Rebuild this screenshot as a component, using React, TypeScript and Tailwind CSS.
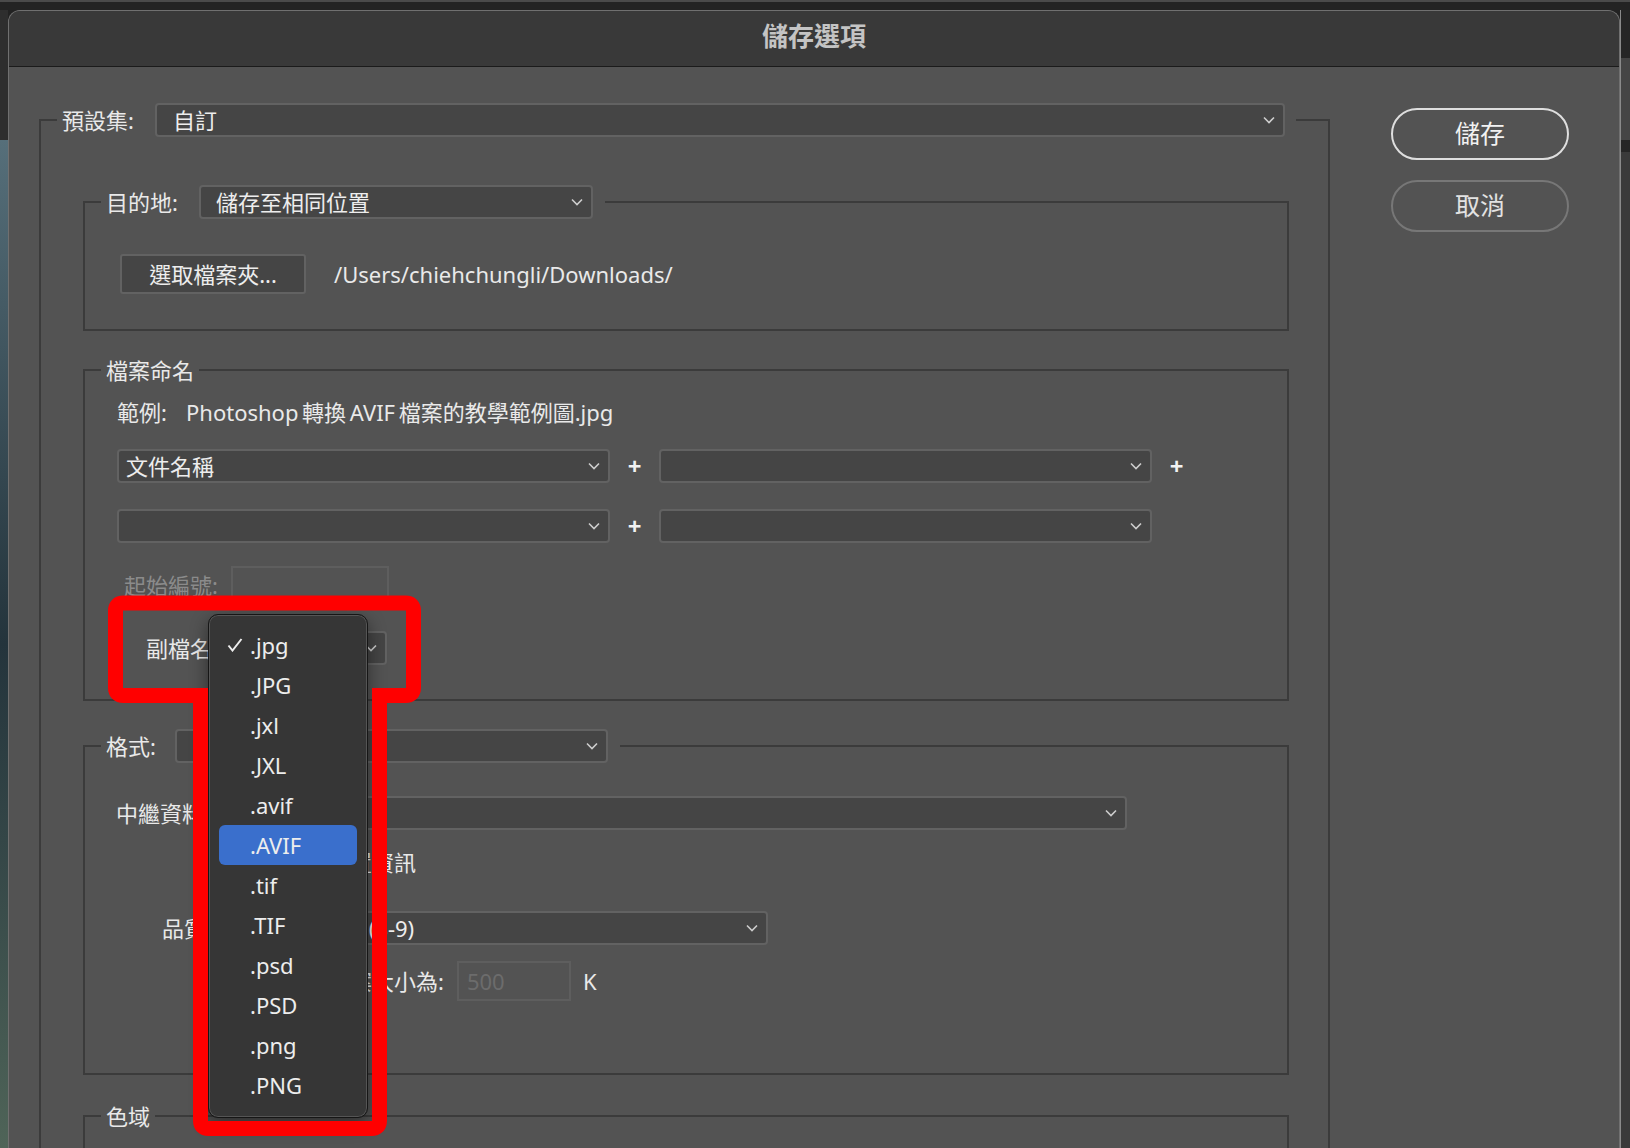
import React from "react";

// Camera Raw「儲存選項」對話框 + 展開中的副檔名選單 + 紅框標示

const exts = [".jpg", ".JPG", ".jxl", ".JXL", ".avif", ".AVIF", ".tif", ".TIF", ".psd", ".PSD", ".png", ".PNG"];

function Chevron() {
  return (
    <svg width="12" height="8" viewBox="0 0 12 8" className="shrink-0">
      <path d="M1 1.5L6 6.5L11 1.5" fill="none" stroke="#cdcdcd" strokeWidth="1.6" />
    </svg>
  );
}

function Select({ className = "", text = "", pad = "pl-[14px]" }: { className?: string; text?: string; pad?: string }) {
  return (
    <div className={`flex items-center h-[34px] bg-[#454545] border-2 border-[#626262] rounded-[4px] pr-[8px] ${pad} ${className}`}>
      <span className="flex-1 whitespace-nowrap text-[22px] leading-[28px] text-[#ededed]">{text}</span>
      <Chevron />
    </div>
  );
}

function Plus() {
  return <div className="w-[49px] flex justify-center text-[24px] font-bold leading-none text-[#f2f2f2]">+</div>;
}

function Checkbox() {
  return <div className="w-[16px] h-[16px] rounded-[3px] border-2 border-[#8a8a8a] bg-[#454545]" />;
}

export default function App() {
  return (
    <div className="relative w-[1630px] h-[1148px] overflow-hidden bg-[#222] text-[#e9e9e9] [font-family:'Noto_Sans','Noto_Sans_CJK_TC',sans-serif]">
      {/* top strip of the desktop */}
      <div className="h-[10px] border-t-2 border-[#4a4a4a] bg-[#232323]" />

      <div className="flex h-[1138px]">
        {/* left edge: background picture */}
        <div className="w-[8px] flex flex-col">
          <div className="h-[130px] bg-[#2e2e2e]" />
          <div className="flex-1 bg-gradient-to-b from-[#566f7a] via-[#24343c] to-[#4f6458]" />
        </div>

        {/* ── Window ── */}
        <div className="w-[1612px] flex flex-col rounded-t-[12px] border-x border-t border-[#707070] overflow-hidden bg-[#535353]">
          <div className="h-[56px] shrink-0 pb-[4px] bg-[#393939] border-b border-[#1b1b1b] flex items-center justify-center text-[26px] font-bold text-[#c4c4c4]">
            儲存選項
          </div>

          <div className="flex pl-[30px] pt-[36px]">
            {/* 預設集 group */}
            <fieldset className="w-[1291px] shrink-0 border-2 border-[#3b3b3b]">
              <legend className="ml-[16px] pl-[5px] pr-[11px]">
                <div className="flex items-center">
                  <span className="w-[93px] text-[22px] leading-[28px]">預設集:</span>
                  <Select className="w-[1130px]" text="自訂" pad="pl-[16px]" />
                </div>
              </legend>

              <div className="pl-[42px] pr-[39px] pt-[48px]">
                {/* 目的地 */}
                <fieldset className="border-2 border-[#3b3b3b]">
                  <legend className="ml-[16px] pl-[5px] pr-[12px]">
                    <div className="flex items-center">
                      <span className="w-[93px] text-[22px] leading-[28px]">目的地:</span>
                      <Select className="w-[394px]" text="儲存至相同位置" pad="pl-[15px]" />
                    </div>
                  </legend>
                  <div className="flex items-center pl-[35px] py-[35px]">
                    <button className="w-[186px] h-[40px] bg-[#454545] border-2 border-[#626262] rounded-[3px] text-[22px] leading-[28px] text-[#ededed]">
                      選取檔案夾...
                    </button>
                    <span className="ml-[28px] text-[22px] leading-[28px]">/Users/chiehchungli/Downloads/</span>
                  </div>
                </fieldset>

                {/* 檔案命名 */}
                <fieldset className="mt-[24px] border-2 border-[#3b3b3b]">
                  <legend className="ml-[16px] px-[5px] text-[22px] leading-[30px]">檔案命名</legend>
                  <div className="pl-[32px] pb-[34px]">
                    <div className="mt-[12px] h-[30px] flex items-center text-[22px] leading-[28px]">
                      <span className="w-[69px]">範例:</span>
                      <span>Photoshop{"\u2009"}轉換{"\u2009"}AVIF{"\u2009"}檔案的教學範例圖.jpg</span>
                    </div>
                    <div className="mt-[22px] flex items-center">
                      <Select className="w-[493px]" text="文件名稱" pad="pl-[7px]" />
                      <Plus />
                      <Select className="w-[493px]" />
                      <Plus />
                    </div>
                    <div className="mt-[26px] flex items-center">
                      <Select className="w-[493px]" />
                      <Plus />
                      <Select className="w-[493px]" />
                    </div>
                    <div className="mt-[23px] flex items-center">
                      <span className="w-[114px] pr-[13px] text-right text-[22px] leading-[28px] text-[#8b8b8b]">起始編號:</span>
                      <div className="w-[158px] h-[37px] border-2 border-[#5e5e5e]" />
                    </div>
                    <div className="mt-[28px] flex items-center">
                      <span className="w-[114px] pr-[13px] text-right text-[22px] leading-[28px]">副檔名:</span>
                      <Select className="w-[156px]" text=".jpg" />
                    </div>
                  </div>
                </fieldset>

                {/* 格式 */}
                <fieldset className="mt-[28px] border-2 border-[#3b3b3b]">
                  <legend className="ml-[16px] pl-[5px] pr-[12px]">
                    <div className="flex items-center">
                      <span className="w-[69px] text-[22px] leading-[28px]">格式:</span>
                      <Select className="w-[433px]" text="JPEG" pad="pl-[24px]" />
                    </div>
                  </legend>
                  <div className="pl-[31px] pb-[72px]">
                    <div className="mt-[33px] flex items-center">
                      <span className="w-[113px] text-[22px] leading-[28px]">中繼資料:</span>
                      <Select className="w-[898px]" text="全部" />
                    </div>
                    <div className="mt-[17px] h-[30px] flex items-center pl-[140px]">
                      <Checkbox />
                      <span className="ml-[12px] text-[22px] leading-[28px]">移除位置資訊</span>
                    </div>
                    <div className="mt-[34px] flex items-center">
                      <span className="w-[113px] pl-[46px] text-[22px] leading-[28px]">品質:</span>
                      <div className="w-[84px] h-[34px] border-2 border-[#626262] bg-[#454545] rounded-[3px] flex items-center pl-[10px] text-[22px] leading-[28px]">9</div>
                      <Select className="ml-[12px] w-[443px]" text="高 (8-9)" />
                    </div>
                    <div className="mt-[16px] flex items-center pl-[140px]">
                      <Checkbox />
                      <span className="ml-[12px] text-[22px] leading-[28px]">限制檔案大小為:</span>
                      <div className="ml-[13px] w-[114px] h-[40px] border-2 border-[#5e5e5e] flex items-center pl-[8px] text-[22px] leading-[28px] text-[#6c6c6c]">500</div>
                      <span className="ml-[12px] text-[22px] leading-[28px]">K</span>
                    </div>
                  </div>
                </fieldset>

                {/* 色域 */}
                <fieldset className="mt-[26px] border-2 border-[#3b3b3b]">
                  <legend className="ml-[16px] px-[5px] text-[22px] leading-[30px]">色域</legend>
                  <div className="h-[200px]" />
                </fieldset>
              </div>
            </fieldset>

            {/* buttons */}
            <div className="ml-[61px] mt-[5px] w-[178px] flex flex-col gap-[20px]">
              <button className="h-[52px] pb-[3px] rounded-full border-2 border-[#dedede] text-[25px] leading-[30px] text-[#f2f2f2]">儲存</button>
              <button className="h-[52px] pb-[3px] rounded-full border-2 border-[#777] text-[25px] leading-[30px] text-[#e2e2e2]">取消</button>
            </div>
          </div>
        </div>

        {/* right edge: other app */}
        <div className="w-[10px] flex flex-col border-l border-[#8a8a8a] bg-[#333]">
          <div className="h-[48px] bg-[#262626]" />
          <div className="h-[82px] bg-[#454545]" />
          <div className="h-[12px] bg-[#262626]" />
          <div className="flex-1 bg-[#3a3a3a]" />
        </div>
      </div>

      {/* 副檔名 popup menu */}
      <div className="absolute left-[208px] top-[614px] w-[160px] h-[504px] rounded-[10px] border border-[#161616] bg-[#363636] shadow-[inset_0_0_0_1px_#555,0_6px_18px_rgba(0,0,0,0.45)] pt-[10px]">
        {exts.map((e) => (
          <div
            key={e}
            className={`mx-[10px] h-[40px] flex items-center rounded-[6px] ${e === ".AVIF" ? "bg-[#3a6fcc]" : ""}`}
          >
            <div className="w-[31px] pl-[8px] flex items-center">
              {e === ".jpg" && (
                <svg width="16" height="14" viewBox="0 0 16 14">
                  <path d="M1.5 7.5L5.5 12.5L14.5 1" fill="none" stroke="#ececec" strokeWidth="2" />
                </svg>
              )}
            </div>
            <span className="text-[22px] leading-[28px] text-[#ededed]">{e}</span>
          </div>
        ))}
      </div>

      {/* red annotation outline */}
      <svg className="absolute left-0 top-0 pointer-events-none" width="1630" height="1148">
        <path
          d="M123.5 603H405.5Q413.5 603 413.5 611V687.5Q413.5 695.5 405.5 695.5H379.5V1120.5Q379.5 1128.5 371.5 1128.5H208.5Q200.5 1128.5 200.5 1120.5V695.5H123.5Q115.5 695.5 115.5 687.5V611Q115.5 603 123.5 603Z"
          fill="none"
          stroke="#ff0000"
          strokeWidth="15"
        />
      </svg>
    </div>
  );
}
